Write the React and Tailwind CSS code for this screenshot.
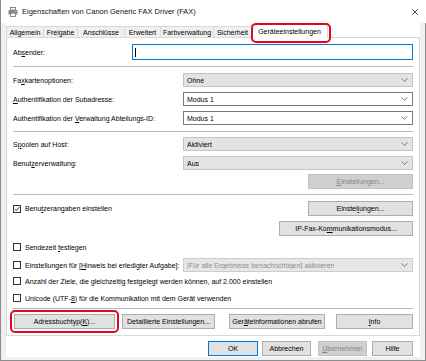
import React from 'react';

const U = ({ children }) => <span className="underline underline-offset-[1px] decoration-[0.5px]">{children}</span>;

function Chevron() {
  return (
    <svg width="7" height="4" viewBox="0 0 7 4" className="shrink-0">
      <path d="M0.5 0.5 L3.5 3.3 L6.5 0.5" fill="none" stroke="#707070" strokeWidth="0.9" />
    </svg>
  );
}

function Combo({ value, variant = 'gray' }) {
  const styles = {
    gray: 'bg-[#e3e3e3] border-[#c4c4c4] text-black',
    white: 'bg-white border-[#7a7a7a] text-black',
    disabled: 'bg-[#e6e6e6] border-[#cccccc] text-[#8d8d8d]',
  };
  return (
    <div className={`ml-auto w-[230px] h-[14px] border flex items-center justify-between pl-[3px] pr-[4px] ${styles[variant]}`}>
      <span className="truncate">{value}</span>
      <Chevron />
    </div>
  );
}

function Btn({ children, w, disabled, focus, className = '' }) {
  const look = disabled
    ? 'bg-[#cfcfcf] border-[#c2c2c2] text-[#858585]'
    : focus
      ? 'bg-[#e1e1e1] border-[#0078d7] text-black'
      : 'bg-[#e1e1e1] border-[#adadad] text-black';
  return (
    <div className={`h-[15px] border flex items-center justify-center shrink-0 ${look} ${className}`} style={{ width: w }}>
      {children}
    </div>
  );
}

function Box({ checked }) {
  return (
    <div className="w-[8px] h-[8px] border border-[#333333] bg-white shrink-0 flex items-center justify-center">
      {checked && (
        <svg width="6" height="6" viewBox="0 0 6 6">
          <path d="M0.6 3 L2.3 4.7 L5.4 1" fill="none" stroke="#222" strokeWidth="0.9" />
        </svg>
      )}
    </div>
  );
}

function Sep({ mt }) {
  return <div className={`h-px bg-[#b9b9b9] ${mt}`} />;
}

const TABS = [
  { label: 'Allgemein', w: 'w-[37px]' },
  { label: 'Freigabe', w: 'w-[34px]' },
  { label: 'Anschlüsse', w: 'w-[47px]' },
  { label: 'Erweitert', w: 'w-[36px]' },
  { label: 'Farbverwaltung', w: 'w-[53px]' },
  { label: 'Sicherheit', w: 'w-[38px]' },
];

export default function App() {
  return (
    <div className="w-[426px] h-[361px] flex flex-col overflow-hidden bg-white text-[7px] leading-none text-black font-['Liberation_Sans',Arial,sans-serif]">
      {/* Title bar */}
      <div className="h-[23px] shrink-0 flex items-center pl-[7px] pr-[8px] border-l border-[#8c8c8c]">
        <svg width="10" height="10" viewBox="0 0 10 10">
          <rect x="2.5" y="0.5" width="5" height="2.5" fill="#fff" stroke="#6b6b6b" strokeWidth="0.8" />
          <rect x="0.5" y="3" width="9" height="4.5" rx="0.6" fill="#8a8a8a" />
          <rect x="2.5" y="6" width="5" height="3.5" fill="#fff" stroke="#6b6b6b" strokeWidth="0.8" />
          <rect x="7.2" y="4" width="1" height="0.8" fill="#dcdcdc" />
        </svg>
        <span className="ml-[4px] text-[7.5px] text-[#111]">Eigenschaften von Canon Generic FAX Driver (FAX)</span>
        <svg width="6" height="6" viewBox="0 0 6 6" className="ml-auto">
          <path d="M0.3 0.3 L5.7 5.7 M5.7 0.3 L0.3 5.7" stroke="#222" strokeWidth="0.8" />
        </svg>
      </div>

      <div className="flex-1 flex">
        <div className="w-[6px] bg-[#f0f0f0] border-l border-[#8c8c8c]" />

        <div className="w-[414px] flex flex-col relative">
          {/* Tabs */}
          <div className="h-[14px] flex items-end">
            {TABS.map(t => (
              <div key={t.label} className={`${t.w} h-[11px] bg-[#f0f0f0] border-t border-l border-[#d9d9d9] flex items-center justify-center overflow-hidden whitespace-nowrap`}>
                {t.label}
              </div>
            ))}
            <div className="w-[77px] h-[14px] -mb-px relative z-10 bg-white border-t border-l border-r border-[#d9d9d9] flex items-center justify-center">
              Geräteeinstellungen
            </div>
          </div>
          <div className="absolute left-[245px] top-0 w-[80px] h-[20px] border-2 border-[#e3061c] rounded-[5px] z-20" />

          {/* Panel */}
          <div className="border border-[#d9d9d9] px-[6px] pt-[6px] pb-[6px] flex flex-col">
            <div className="h-[16px] flex items-center">
              <span>Ab<U>s</U>ender:</span>
              <div className="ml-auto w-[281px] h-[16px] border border-[#0078d7] bg-white flex items-center pl-[2px]">
                <div className="w-px h-[9px] bg-black" />
              </div>
            </div>
            <Sep mt="mt-[6px]" />
            <div className="mt-[6px] h-[14px] flex items-center">
              <span>Fa<U>x</U>kartenoptionen:</span>
              <Combo value="Ohne" />
            </div>
            <div className="mt-[5px] h-[14px] flex items-center">
              <span><U>A</U>uthentifikation der Subadresse:</span>
              <Combo value="Modus 1" variant="white" />
            </div>
            <div className="mt-[5px] h-[14px] flex items-center">
              <span>Authentifikation der <U>V</U>erwaltung Abteilungs-ID:</span>
              <Combo value="Modus 1" variant="white" />
            </div>
            <Sep mt="mt-[6px]" />
            <div className="mt-[5px] h-[14px] flex items-center">
              <span>S<U>p</U>oolen auf Host:</span>
              <Combo value="Aktiviert" />
            </div>
            <div className="mt-[5px] h-[14px] flex items-center">
              <span>Benut<U>z</U>erverwaltung:</span>
              <Combo value="Aus" />
            </div>
            <div className="mt-[4px] flex justify-end">
              <Btn w={105} disabled><span><U>E</U>instellungen...</span></Btn>
            </div>
            <Sep mt="mt-[5px]" />
            <div className="mt-[6px] h-[15px] flex items-center">
              <Box checked />
              <span className="ml-[4px]">Benu<U>t</U>zerangaben einstellen</span>
              <Btn w={105} className="ml-auto"><span>Einstel<U>l</U>ungen...</span></Btn>
            </div>
            <div className="mt-[5px] flex justify-end">
              <Btn w={134}><span>IP-Fax-Ko<U>m</U>munikationsmodus...</span></Btn>
            </div>
            <div className="mt-[5px] h-[12px] flex items-center">
              <Box />
              <span className="ml-[4px]">Sendezeit <U>f</U>estlegen</span>
            </div>
            <div className="mt-[5px] h-[14px] flex items-center">
              <Box />
              <span className="ml-[4px]">Einstellungen für [<U>H</U>inweis bei erledigter Aufgabe]:</span>
              <Combo value="[Für alle Ergebnisse benachrichtigen] aktivieren" variant="disabled" />
            </div>
            <div className="mt-[3px] h-[12px] flex items-center">
              <Box />
              <span className="ml-[4px]">Anzahl der Ziele, die gleichzeitig festgelegt werden können, auf 2.000 einstellen</span>
            </div>
            <div className="mt-[5px] h-[12px] flex items-center">
              <Box />
              <span className="ml-[4px]">Unicode (UTF-<U>8</U>) für die Kommunikation mit dem Gerät verwenden</span>
            </div>
            <Sep mt="mt-[4px]" />
            <div className="mt-[5px] flex items-center">
              <div className="relative ml-px">
                <Btn w={101}><span>Adressbuchtyp(<U>K</U>)...</span></Btn>
                <div className="absolute -left-[4px] -top-[4px] -right-[4px] -bottom-[4px] border-2 border-[#e3061c] rounded-[5px]" />
              </div>
              <Btn w={93} className="ml-[7px]">Detaillierte Einstellungen...</Btn>
              <Btn w={96} className="ml-[14px]"><span>Ger<U>ä</U>teinformationen abrufen</span></Btn>
              <Btn w={77} className="ml-auto"><span><U>I</U>nfo</span></Btn>
            </div>
          </div>

          {/* Dialog buttons */}
          <div className="mt-[5px] flex justify-end pr-[7px]">
            <Btn w={50} focus>OK</Btn>
            <Btn w={49} className="ml-[4px]">Abbrechen</Btn>
            <Btn w={49} disabled className="ml-[7px]"><span><U>Ü</U>bernehmen</span></Btn>
            <Btn w={41} className="ml-[5px]">Hilfe</Btn>
          </div>
        </div>

        <div className="flex-1 bg-[#f0f0f0] border-r border-[#8c8c8c]" />
      </div>
      <div className="h-[4px] shrink-0 bg-[#f0f0f0] border-b border-l border-r border-[#8c8c8c]" />
    </div>
  );
}
